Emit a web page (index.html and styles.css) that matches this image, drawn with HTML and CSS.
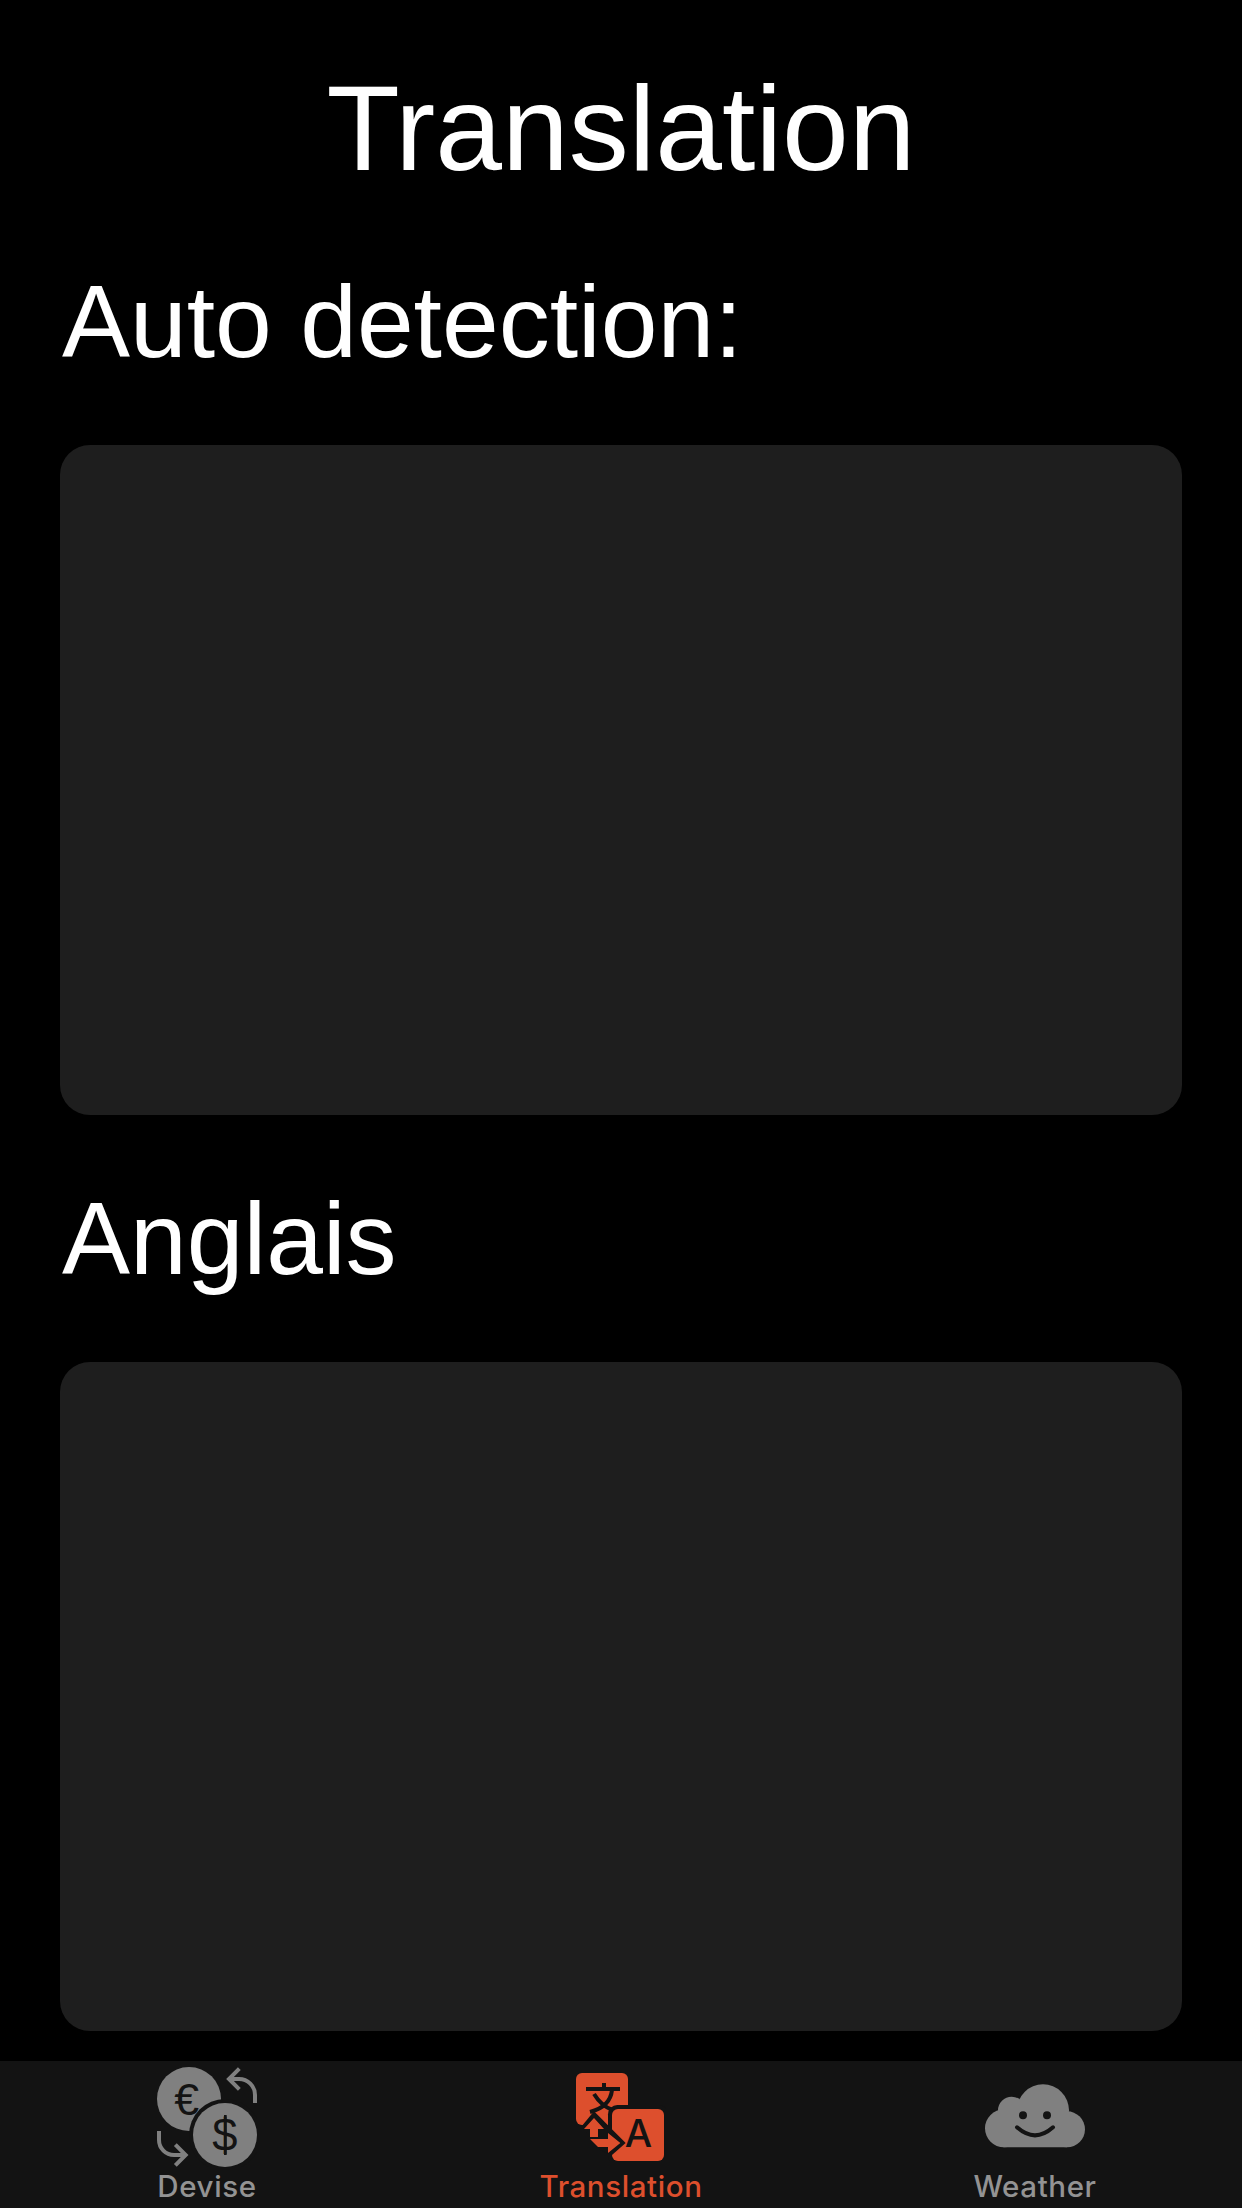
FILE: index.html
```html
<!DOCTYPE html>
<html lang="fr">
<head>
<meta charset="utf-8">
<title>Translation</title>
<link rel="stylesheet" href="styles.css">
</head>
<body>
<div class="app">
  <main class="screen">
    <h1 class="title">Translation</h1>
    <h2 class="label">Auto detection:</h2>
    <div class="panel"></div>
    <h2 class="label">Anglais</h2>
    <div class="panel panel-result"></div>
  </main>
  <nav class="tabs">
    <a class="tab">
      <svg class="icon" width="100" height="100" viewBox="51 51 300 300">
        <circle class="fill" cx="147" cy="147" r="96"/>
        <text class="sign" x="103" y="194" font-size="134">€</text>
        <circle class="cut" cx="255" cy="255" r="108"/>
        <circle class="fill" cx="255" cy="255" r="96"/>
        <text class="sign" x="217" y="303" font-size="136">$</text>
        <path class="bar" d="M256 195V315"/>
        <path class="line" d="M345 159V135A48 48 0 0 0 297 87H267M298 56L267 87L298 118"/>
        <path class="line" d="M57 243V270A45 45 0 0 0 102 315H137M106 284L137 315L106 346"/>
      </svg>
      <span class="name">Devise</span>
    </a>
    <a class="tab active">
      <svg class="icon" width="90" height="88" viewBox="168 69 270 264">
        <rect class="fill" x="168" y="69" width="156" height="156" rx="18"/>
        <rect class="cut" x="264" y="165" width="180" height="180" rx="28"/>
        <rect class="fill" x="276" y="177" width="156" height="156" rx="18"/>
        <path class="stroke" d="M198 117H300M252 99V117M222 132Q244 168 278 180M276 120C272 158 244 177 210 186"/>
        <path class="cut" d="M185 229L222 184L317 279L276 315L240 300Z"/>
        <path class="fill" d="M222 204L252 237H234V261H210V237H192ZM210 267H264V249L301 279L264 309V291H234Z"/>
        <text class="sign letter" x="314" y="292" font-size="116">A</text>
      </svg>
      <span class="name">Translation</span>
    </a>
    <a class="tab">
      <svg class="icon cloud" width="100" height="64" viewBox="105 101 300 192">
        <circle class="fill" cx="162" cy="234" r="57"/>
        <circle class="fill" cx="185" cy="180" r="41"/>
        <circle class="fill" cx="279" cy="180" r="78"/>
        <circle class="fill" cx="351" cy="237" r="54"/>
        <path class="fill" d="M160 180H351V291H160Z"/>
        <circle class="cut" cx="219" cy="195" r="12"/>
        <circle class="cut" cx="291" cy="195" r="12"/>
        <path class="smile" d="M201 231Q255 279 309 231"/>
      </svg>
      <span class="name">Weather</span>
    </a>
  </nav>
</div>
</body>
</html>
```
FILE: styles.css
```css
* { box-sizing: border-box; }
body { margin: 0; background: #000; }
.app { display: flex; flex-direction: column; width: 1242px; height: 2208px; overflow: hidden; background: #000; color: #fff; }
.screen { flex: 1; padding: 59px 60px 0; font-family: "Liberation Sans", Arial, sans-serif; }
.title { margin: 0; height: 193px; font-size: 120px; font-weight: 400; line-height: 138px; text-align: center; }
.label { margin: 0; height: 193px; padding: 11px 0 0 2px; font-size: 102px; font-weight: 400; line-height: 118px; }
.panel { height: 670px; border-radius: 30px; background: #1e1e1e; }
.panel + .label { height: 247px; padding-top: 65px; }
.panel-result { height: 669px; }
.tabs { display: flex; height: 147px; background: #131313; }
.tab { flex: 1; display: flex; flex-direction: column; align-items: center; padding-top: 6px; color: #808080; }
.icon { display: block; margin: auto 0; }
.cloud { margin: 17px 0 auto; }
.name { height: 41px; font: 500 29.5px/38px Inter, sans-serif; letter-spacing: 0.6px; color: #939393; }
.active, .active .name { color: #dd4f2d; }
.fill { fill: currentColor; }
.cut, .sign { fill: #131313; }
.sign { font-family: "Liberation Sans", Arial, sans-serif; }
.letter { font-family: Inter, sans-serif; font-weight: 500; }
.line { fill: none; stroke: currentColor; stroke-width: 12; }
.bar { stroke: #131313; stroke-width: 8; }
.stroke { fill: none; stroke: #131313; stroke-width: 12; }
.smile { fill: none; stroke: #131313; stroke-width: 12; stroke-linecap: round; }
```
